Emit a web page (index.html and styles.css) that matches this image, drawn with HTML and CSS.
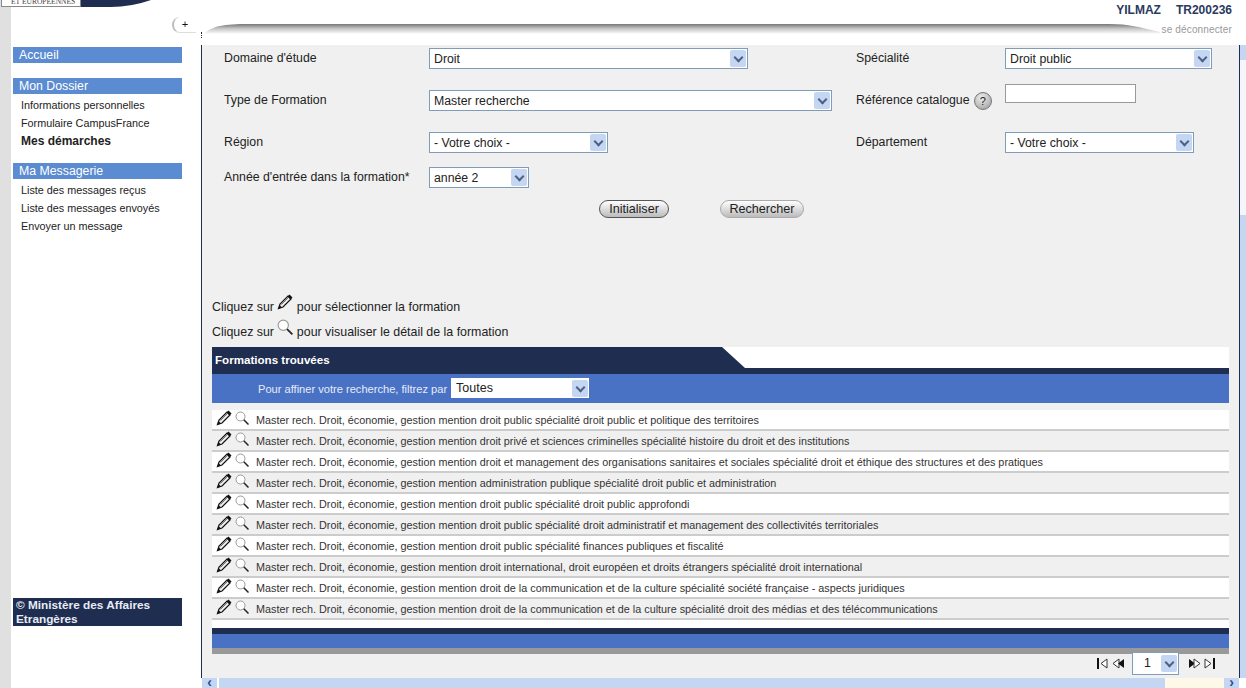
FILE: index.html
```html
<!DOCTYPE html>
<html lang="fr">
<head>
  <meta charset="UTF-8">
  <title>Mes démarches</title>
  <link rel="stylesheet" href="styles.css">
</head>
<body>
  <svg class="defs" width="0" height="0">
    <symbol id="pencil" viewBox="0 0 16 16">
      <path d="M1.500 14.500L3 10l8-8 3 3-8 8z" fill="#eee" stroke="#111" stroke-width="1.200"/>
      <path d="M4.500 10.500l7-7" stroke="#777"/>
      <path d="M10.500 2.500l2-2 3 3-2 2z" fill="#111"/>
      <path d="M1.500 14.500L2.600 11 5 13.400z" fill="#111"/>
    </symbol>
    <symbol id="loupe" viewBox="0 0 14 14">
      <circle cx="5.500" cy="5.500" r="4.500" fill="#fff" stroke="#999"/>
      <path d="M8.800 8.800L13.500 13.500" stroke="#222" stroke-width="1.500"/>
    </symbol>
  </svg>

  <header class="top">
    <div class="logo">
      <div class="logo-box">ET EUROPEENNES</div>
      <svg width="70" height="7" viewBox="0 0 70 7"><path d="M0 0H70Q50 7 30 7H0z" fill="#1f2d50"/></svg>
    </div>
    <div class="toggle">+</div>
    <div class="swoosh">
      <svg width="956" height="10" viewBox="0 0 956 10">
        <defs>
          <linearGradient id="sw" x1="0" y1="0" x2="0" y2="1">
            <stop offset="0" stop-color="#777"/>
            <stop offset=".45" stop-color="#c4c4c4"/>
            <stop offset="1" stop-color="#fff"/>
          </linearGradient>
        </defs>
        <path d="M0 10C8 2 20 0 45 0H905C925 0 935 3 956 8V10z" fill="url(#sw)"/>
      </svg>
    </div>
    <div class="user">
      <div class="user-name"><span>YILMAZ</span><span>TR200236</span></div>
      <a class="logout">se déconnecter</a>
    </div>
  </header>

  <div class="layout">
    <aside class="side">
      <div class="side-menu">
        <div class="side-title">Accueil</div>
        <div class="side-title">Mon Dossier</div>
        <ul class="side-list">
          <li>Informations personnelles</li>
          <li>Formulaire CampusFrance</li>
          <li class="current">Mes démarches</li>
        </ul>
        <div class="side-title">Ma Messagerie</div>
        <ul class="side-list">
          <li>Liste des messages reçus</li>
          <li>Liste des messages envoyés</li>
          <li>Envoyer un message</li>
        </ul>
      </div>
      <div class="side-foot">© Ministère des Affaires Etrangères</div>
    </aside>

    <main class="main">
      <form class="search">
        <label>Domaine d'étude</label>
        <div class="sel w319"><span>Droit</span><i class="arrow"></i></div>
        <label>Spécialité</label>
        <div class="sel w207"><span>Droit public</span><i class="arrow"></i></div>

        <label>Type de Formation</label>
        <div class="sel w403"><span>Master recherche</span><i class="arrow"></i></div>
        <label>Référence catalogue <b class="help">?</b></label>
        <div class="ref-input"></div>

        <label>Région</label>
        <div class="sel w179"><span>- Votre choix -</span><i class="arrow"></i></div>
        <label>Département</label>
        <div class="sel w189"><span>- Votre choix -</span><i class="arrow"></i></div>

        <label>Année d'entrée dans la formation*</label>
        <div class="sel w100"><span>année 2</span><i class="arrow"></i></div>
      </form>

      <div class="buttons">
        <button type="button" class="btn b1">Initialiser</button>
        <button type="button" class="btn b2">Rechercher</button>
      </div>

      <p class="hint h1">Cliquez sur <svg width="16" height="16"><use href="#pencil"/></svg> pour sélectionner la formation</p>
      <p class="hint">Cliquez sur <svg width="16" height="16"><use href="#loupe"/></svg> pour visualiser le détail de la formation</p>

      <section class="results">
        <div class="res-head">
          <div class="res-tab">Formations trouvées</div>
        </div>
        <div class="res-filter">
          <span>Pour affiner votre recherche, filtrez par</span>
          <div class="sel sel-filter"><span>Toutes</span><i class="arrow"></i></div>
        </div>
        <ul class="res-list">
          <li><svg width="16" height="16"><use href="#pencil"/></svg><svg width="14" height="14"><use href="#loupe"/></svg>Master rech. Droit, économie, gestion mention droit public spécialité droit public et politique des territoires</li>
          <li><svg width="16" height="16"><use href="#pencil"/></svg><svg width="14" height="14"><use href="#loupe"/></svg>Master rech. Droit, économie, gestion mention droit privé et sciences criminelles spécialité histoire du droit et des institutions</li>
          <li><svg width="16" height="16"><use href="#pencil"/></svg><svg width="14" height="14"><use href="#loupe"/></svg>Master rech. Droit, économie, gestion mention droit et management des organisations sanitaires et sociales spécialité droit et éthique des structures et des pratiques</li>
          <li><svg width="16" height="16"><use href="#pencil"/></svg><svg width="14" height="14"><use href="#loupe"/></svg>Master rech. Droit, économie, gestion mention administration publique spécialité droit public et administration</li>
          <li><svg width="16" height="16"><use href="#pencil"/></svg><svg width="14" height="14"><use href="#loupe"/></svg>Master rech. Droit, économie, gestion mention droit public spécialité droit public approfondi</li>
          <li><svg width="16" height="16"><use href="#pencil"/></svg><svg width="14" height="14"><use href="#loupe"/></svg>Master rech. Droit, économie, gestion mention droit public spécialité droit administratif et management des collectivités territoriales</li>
          <li><svg width="16" height="16"><use href="#pencil"/></svg><svg width="14" height="14"><use href="#loupe"/></svg>Master rech. Droit, économie, gestion mention droit public spécialité finances publiques et fiscalité</li>
          <li><svg width="16" height="16"><use href="#pencil"/></svg><svg width="14" height="14"><use href="#loupe"/></svg>Master rech. Droit, économie, gestion mention droit international, droit européen et droits étrangers spécialité droit international</li>
          <li><svg width="16" height="16"><use href="#pencil"/></svg><svg width="14" height="14"><use href="#loupe"/></svg>Master rech. Droit, économie, gestion mention droit de la communication et de la culture spécialité société française - aspects juridiques</li>
          <li><svg width="16" height="16"><use href="#pencil"/></svg><svg width="14" height="14"><use href="#loupe"/></svg>Master rech. Droit, économie, gestion mention droit de la communication et de la culture spécialité droit des médias et des télécommunications</li>
        </ul>
        <div class="res-foot"></div>
        <div class="pager">
          <svg width="11" height="11" viewBox="0 0 11 11"><path d="M1 0v11" stroke="#111" stroke-width="2"/><path d="M10 1L4 5.500l6 4.500z" fill="#fff" stroke="#333"/></svg>
          <svg class="pg-prev" width="13" height="11" viewBox="0 0 13 11"><path d="M7 1L1 5.500 7 10z" fill="#fff" stroke="#333"/><path d="M12 1L6 5.500l6 4.500z" fill="#111"/></svg>
          <div class="sel sel-page"><span>1</span><i class="arrow"></i></div>
          <svg width="13" height="11" viewBox="0 0 13 11"><path d="M1 1l6 4.500L1 10z" fill="#111"/><path d="M6 1l6 4.500L6 10z" fill="#fff" stroke="#333"/></svg>
          <svg class="pg-last" width="11" height="11" viewBox="0 0 11 11"><path d="M1 1l6 4.500L1 10z" fill="#fff" stroke="#333"/><path d="M10 0v11" stroke="#111" stroke-width="2"/></svg>
        </div>
      </section>
    </main>

    <div class="vscroll">
      <div class="vs-btn"></div>
      <div class="vs-track"></div>
      <div class="vs-thumb"></div>
    </div>
  </div>

  <div class="hscroll">
    <div class="hs-spacer"></div>
    <div class="hs-btn">‹</div>
    <div class="hs-thumb"></div>
    <div class="hs-track"></div>
    <div class="hs-btn">›</div>
  </div>
</body>
</html>
```

FILE: styles.css
```css
* {
  box-sizing: border-box;
}
html, body {
  margin: 0;
  height: 100%;
  overflow: hidden;
}
body {
  width: 1246px;
  height: 688px;
  display: flex;
  flex-direction: column;
  background: #fff;
  font-family: "Liberation Sans", Arial, sans-serif;
  font-size: 12.300px;
  color: #222;
}
.defs {
  position: absolute;
}

/* header */
.top {
  flex: none;
  height: 45px;
  position: relative;
  background: linear-gradient(90deg, #e0e0e0 11px, #fff 11px);
}
.top::after {
  content: "";
  position: absolute;
  left: 201px;
  top: 32px;
  height: 6px;
  border-left: 1px dotted #222;
}
.logo {
  display: flex;
  align-items: flex-start;
  padding-left: 1px;
}
.logo-box {
  width: 80px;
  height: 7px;
  border: 1px solid #888;
  border-top: none;
  background: #fff;
  font-family: "Liberation Serif", serif;
  font-size: 7.500px;
  line-height: 3px;
  padding-left: 9px;
  color: #444;
  overflow: hidden;
}
.toggle {
  position: absolute;
  left: 172px;
  top: 17px;
  width: 24px;
  height: 16px;
  border-left: 2px solid #bbb;
  border-bottom: 1px solid #ddd;
  border-radius: 8px 0 0 8px;
  font-size: 11px;
  line-height: 14px;
  text-align: center;
  color: #111;
}
.swoosh {
  position: absolute;
  left: 204px;
  top: 24px;
  line-height: 0;
}
.user {
  position: absolute;
  right: 14px;
  top: 3px;
  text-align: right;
}
.user-name {
  display: flex;
  gap: 15px;
  font-weight: bold;
  font-size: 12px;
  line-height: 14px;
  color: #2a3a5e;
}
.logout {
  display: block;
  margin-top: 7px;
  font-size: 10px;
  letter-spacing: .15px;
  line-height: 12px;
  color: #999;
}

/* page body */
.layout {
  flex: 1;
  min-height: 0;
  display: flex;
}
.side {
  width: 201px;
  flex: none;
  display: flex;
  flex-direction: column;
  justify-content: space-between;
  padding: 2px 19px 52px 13px;
  background: linear-gradient(90deg, #e0e0e0 11px, #fff 11px);
}
.side-title {
  height: 16px;
  padding-left: 6px;
  background: #5b8bd0;
  color: #fff;
  font-size: 12.300px;
  line-height: 16px;
  margin-bottom: 15px;
}
.side-list {
  list-style: none;
  margin: -13px 0 13px;
  padding: 0 0 0 8px;
}
.side-list li {
  height: 18px;
  font-size: 10.800px;
  line-height: 18px;
}
.side-list .current {
  font-weight: bold;
  font-size: 12px;
}
.side-foot {
  height: 28px;
  padding: 0 10px 0 3px;
  background: #1f2d50;
  color: #e8ecf4;
  font-size: 11.800px;
  font-weight: bold;
  line-height: 14px;
}

.main {
  width: 1039px;
  flex: none;
  background: #f0f0f0;
  border-left: 1px solid #1f2d50;
  border-right: 1px solid #1f2d50;
  padding: 3px 10px 0;
}

/* search form */
.search {
  display: grid;
  grid-template-columns: 205px 427px 149px 1fr;
  grid-template-rows: 42px 42px 35px 21px;
  align-items: start;
  padding-left: 12px;
}
.search label {
  line-height: 21px;
}
.help {
  display: inline-block;
  width: 18px;
  height: 18px;
  margin-left: 1px;
  border-radius: 50%;
  background: radial-gradient(circle at 40% 30%, #eee, #999);
  border: 1px solid #777;
  font-size: 11px;
  font-weight: normal;
  line-height: 16px;
  text-align: center;
  vertical-align: middle;
}
.ref-input {
  width: 131px;
  height: 19px;
  margin-top: -6px;
  background: #fff;
  border: 1px solid #999;
}
.sel {
  height: 21px;
  display: flex;
  align-items: center;
  justify-content: space-between;
  background: #fff;
  border: 1px solid #7f9db9;
  padding: 1px 1px 1px 4px;
  color: #222;
}
.arrow {
  width: 16px;
  height: 17px;
  background: #c5d6f3;
  border-radius: 2px;
  position: relative;
}
.arrow::after {
  content: "";
  position: absolute;
  left: 5px;
  top: 4px;
  width: 5px;
  height: 5px;
  border-right: 2px solid #4d6185;
  border-bottom: 2px solid #4d6185;
  transform: rotate(45deg);
}
.w319 { width: 319px; }
.w403 { width: 403px; }
.w207 { width: 207px; }
.w179 { width: 179px; }
.w189 { width: 189px; }
.w100 { width: 100px; }

.buttons {
  display: flex;
  margin-top: 12px;
  padding-left: 387px;
  gap: 51px;
}
.btn {
  height: 18px;
  padding: 0;
  border: 1px solid #777;
  border-radius: 9px;
  background: linear-gradient(#fff, #ddd 50%, #bbb);
  font-family: inherit;
  font-size: 12.600px;
  line-height: 14px;
  color: #222;
}
.b1 { width: 70px; border-color: #555; }
.b2 { width: 84px; border-color: #aaa; }

.hint {
  margin: 0;
  font-size: 12.400px;
  height: 25px;
  line-height: 25px;
}
.hint svg {
  vertical-align: 1px;
}
.h1 {
  margin-top: 76px;
}

/* results */
.results {
  margin-top: 3px;
}
.res-head {
  height: 27px;
  background: #fff;
  border-bottom: 6px solid #1f2d50;
}
.res-tab {
  width: 533px;
  height: 21px;
  margin-top: 1px;
  padding-left: 3px;
  background: #1f2d50;
  clip-path: polygon(0 0, 510px 0, 100% 100%, 0 100%);
  color: #fff;
  font-size: 11.600px;
  font-weight: bold;
  line-height: 26px;
}
.res-filter {
  height: 29px;
  display: flex;
  align-items: center;
  padding-left: 46px;
  gap: 4px;
  background: #4a72c4;
  color: #e6ecf8;
  font-size: 11.100px;
}
.sel-filter {
  width: 138px;
  height: 20px;
  border: none;
  margin-top: -1px;
  padding-left: 5px;
  font-size: 12.500px;
}
.res-list {
  list-style: none;
  margin: 7px 0 0;
  padding: 0;
}
.res-list li {
  height: 21px;
  display: flex;
  align-items: center;
  padding-left: 4px;
  border-bottom: 2px solid #ccc;
  font-size: 10.800px;
  color: #333;
}
.res-list li:nth-child(odd) {
  background: #fff;
}
.res-list svg {
  flex: none;
  margin: -3px 3px 0 0;
}
.res-list svg + svg {
  margin-right: 7px;
}
.res-foot {
  height: 34px;
  background: linear-gradient(#fff 8px, #1f2d50 8px, #1f2d50 14px, #4a72c4 14px, #4a72c4 28px, #999 28px);
}
.pager {
  display: flex;
  align-items: center;
  justify-content: flex-end;
  height: 18px;
  padding-right: 14px;
}
.pg-prev {
  margin-left: 4px;
}
.pg-last {
  margin-left: 3px;
}
.sel-page {
  width: 47px;
  height: 23px;
  flex: none;
  margin: 0 9px 0 7px;
  padding-left: 11px;
}

/* browser scrollbars */
.vscroll {
  flex: 1;
  display: flex;
  flex-direction: column;
  background: #f4f6fb;
}
.vs-btn {
  height: 15px;
  background: #c5d6f3;
}
.vs-track {
  height: 155px;
}
.vs-thumb {
  flex: 1;
  background: #c5d6f3;
}
.hscroll {
  flex: none;
  height: 10px;
  display: flex;
  background: #fff;
}
.hs-spacer {
  width: 202px;
  background: linear-gradient(90deg, #e0e0e0 11px, #fff 11px);
}
.hs-btn {
  width: 15px;
  background: #c5d6f3;
  color: #2c4f94;
  font-size: 14px;
  font-weight: bold;
  line-height: 9px;
  text-align: center;
}
.hs-thumb {
  width: 946px;
  margin-left: 2px;
  background: #c5d6f3;
}
.hs-track {
  width: 59px;
  background: #fdf8e8;
}
```
